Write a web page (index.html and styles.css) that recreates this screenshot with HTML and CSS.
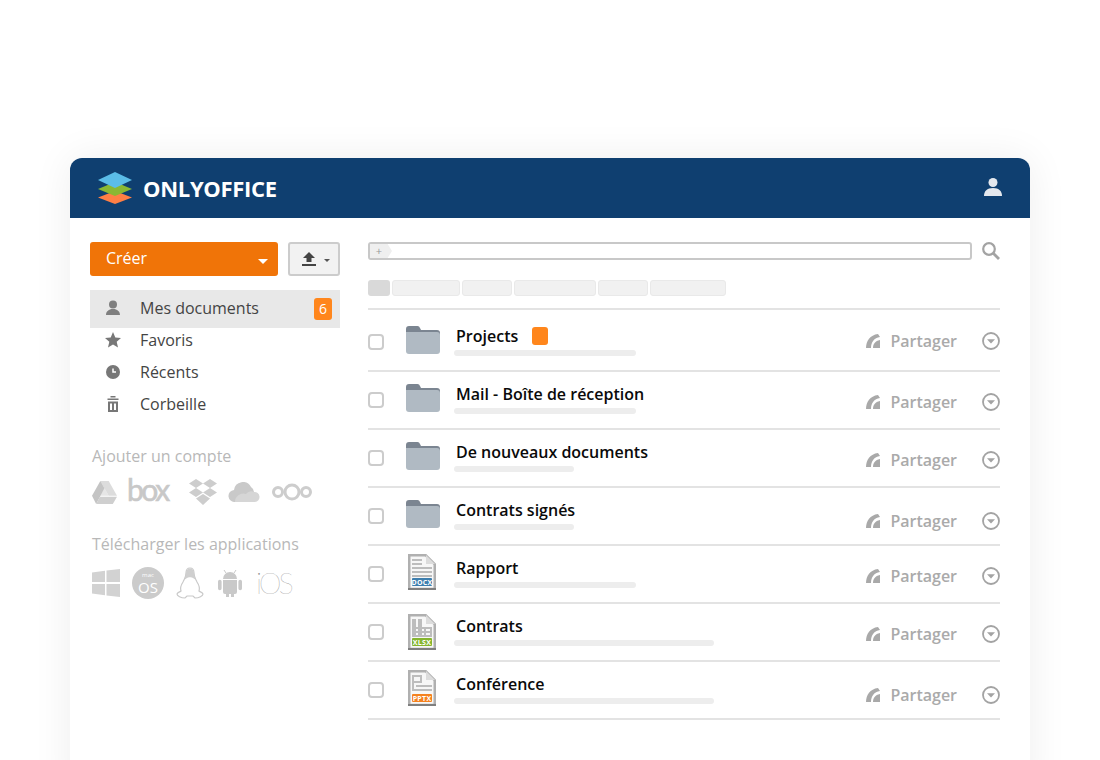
FILE: index.html
```html
<!DOCTYPE html>
<html lang="en">

<head>
    <meta charset="UTF-8">
    <meta name="viewport" content="width=device-width, initial-scale=1.0">
    <title>ONLYOFFICE</title>
    <link rel="stylesheet" href="styles.css">
</head>

<body>
    <svg class="defs" width="0" height="0">
        <symbol id="folder" viewBox="0 0 34 28">
            <path fill="#7b8591" d="M0 3a3 3 0 0 1 3-3h8a3 3 0 0 1 3 2l1 2h16a3 3 0 0 1 3 3v6H0z" />
            <path fill="#b0bac3" d="M0 6h31a3 3 0 0 1 3 3v16a3 3 0 0 1-3 3H3a3 3 0 0 1-3-3z" />
        </symbol>
        <symbol id="share" viewBox="0 0 14 14">
            <path fill="#a9a9a9" d="M0 14C0 7 4 1 12 0l2 3C8 4 5 8 5 14z" />
            <path fill="#a9a9a9" d="M7 14c0-4 2-7 7-8v8z" />
        </symbol>
        <symbol id="more" viewBox="0 0 18 18">
            <circle cx="9" cy="9" r="8" fill="none" stroke="#a3a3a3" stroke-width="1.8" />
            <path fill="#a3a3a3" d="M5 7.2h8L9 11.6z" />
        </symbol>
    </svg>

    <div class="window">
        <header class="topbar">
            <div class="logo">
                <svg width="38" height="32" viewBox="0 0 38 32">
                    <path fill="#ff7f45" d="M19 19l17 6.5L19 32 2 25.5z" />
                    <path fill="#8ab833" d="M19 10l17 7-17 7-17-7z" />
                    <path fill="#5bbde8" d="M19 0l17 8-17 8L2 8z" />
                </svg>
                <span class="logo-text">ONLYOFFICE</span>
            </div>
            <svg class="user" width="20" height="20" viewBox="0 0 20 20">
                <circle cx="10" cy="5.5" r="4.5" fill="#e4e8ee" />
                <path fill="#e4e8ee" d="M1 19c0-5 3-8 9-8s9 3 9 8z" />
            </svg>
        </header>

        <div class="content">
            <aside class="sidebar">
                <div class="actions">
                    <button class="create">Créer<span class="caret"></span></button>
                    <button class="upload">
                        <svg width="14" height="14" viewBox="0 0 14 14">
                            <path fill="#444" d="M7 0l6 6H9.500v4h-5V6H1zM0 12h14v2H0z" />
                        </svg>
                        <span class="caret small"></span>
                    </button>
                </div>

                <nav class="nav">
                    <a class="nav-item active">
                        <svg width="16" height="16" viewBox="0 0 16 16">
                            <circle cx="8" cy="4.500" r="4" fill="#7f7f7f" />
                            <path fill="#7f7f7f" d="M1 15c0-4 3-5 5-6h4c2 1 5 2 5 6z" />
                        </svg>
                        Mes documents
                        <span class="badge">6</span>
                    </a>
                    <a class="nav-item">
                        <svg width="16" height="16" viewBox="0 0 16 16">
                            <path fill="#777" d="M8 0l2.300 5.500 5.700.5-4.300 3.800 1.300 5.700L8 12.500l-5 3 1.300-5.700L0 6l5.700-.5z" />
                        </svg>
                        Favoris
                    </a>
                    <a class="nav-item">
                        <svg width="16" height="16" viewBox="0 0 16 16">
                            <circle cx="8" cy="8" r="7" fill="#777" />
                            <path fill="none" stroke="#fff" stroke-width="1.500" d="M8 4.500V8h3" />
                        </svg>
                        Récents
                    </a>
                    <a class="nav-item">
                        <svg width="16" height="16" viewBox="0 0 16 16">
                            <path fill="#777" d="M5.500 0h5v1.500h-5zM2.500 2.500h11V4h-11zM3 5.500h10V16H3zM5 7.500V14h2V7.500zM9 7.500V14h2V7.500z" fill-rule="evenodd" />
                        </svg>
                        Corbeille
                    </a>
                </nav>

                <p class="side-title">Ajouter un compte</p>
                <div class="brands">
                    <svg width="25" height="23" viewBox="0 0 24 22">
                        <path fill="#e6e6e6" d="M12 7l4 7H8z" />
                        <path fill="#dcdcdc" d="M8 0h8l8 14h-8z" />
                        <path fill="#c4c4c4" d="M8 0l4 7-8 15-4-8z" />
                        <path fill="#cfcfcf" d="M7.500 15H24l-4 7H4z" />
                    </svg>
                    <span class="box-logo">box</span>
                    <svg class="dropbox" width="28" height="26" viewBox="0 0 28 26">
                        <path fill="#cdcdcd" d="M7 0l7 4.500L7 9 0 4.500zM21 0l7 4.500L21 9l-7-4.500zM0 13.500L7 9l7 4.500L7 18zM21 9l7 4.500L21 18l-7-4.500zM7 19.500l7-4.500 7 4.500-7 6.500z" />
                    </svg>
                    <svg class="cloud" width="33" height="20" viewBox="0 0 33 20">
                        <path fill="#c9c9c9" d="M7 20a6 6 0 0 1-1-12 9 9 0 0 1 17-3 6.500 6.500 0 0 1 3 5z" />
                        <path fill="#d6d6d6" d="M7 20c0-6 6-10 11-8a7 7 0 0 1 8-2 5 5 0 0 1 1 10z" />
                    </svg>
                    <svg class="cloud-nc" width="40" height="18" viewBox="0 0 40 18">
                        <g fill="none" stroke="#cdcdcd" stroke-width="3">
                            <circle cx="20" cy="9" r="7" />
                            <circle cx="6" cy="9" r="4.500" />
                            <circle cx="34" cy="9" r="4.500" />
                        </g>
                    </svg>
                </div>

                <p class="side-title second">Télécharger les applications</p>
                <div class="apps">
                    <svg width="28" height="28" viewBox="0 0 28 28">
                        <path fill="#d2d2d2" d="M0 3.500l13-1.800V13H0zM14.500 1.500L28 0v13H14.500zM0 15h13v11.300L0 24.500zM14.500 15H28v13l-13.500-1.500z" />
                    </svg>
                    <svg class="macos" width="32" height="32" viewBox="0 0 32 32">
                        <circle cx="16" cy="16" r="16" fill="#cbcbcb" />
                        <text x="16" y="10" class="macos-small">mac</text>
                        <text x="16" y="26" class="macos-big">OS</text>
                    </svg>
                    <svg class="tux" width="28" height="32" viewBox="0 0 28 32">
                        <path fill="#fff" stroke="#c9c9c9" stroke-width="1.200" d="M14 1c-3 0-4 2-4 5 0 4-1 5-3 9-2 3-3 6-2 9-1 1-3 1-4 3 0 2 4 4 8 4l2-2h6l2 2c4 0 8-2 8-4-1-2-3-2-4-3 1-3 0-6-2-9-2-4-3-5-3-9 0-3-1-5-4-5z" />
                        <path fill="#cfcfcf" d="M10 6c0-6 8-6 8 0 0 3 1 5 2 7l-3-2c-1-1-5-1-6 0l-3 2c1-2 2-4 2-7z" />
                    </svg>
                    <svg class="android" width="24" height="28" viewBox="0 0 24 28">
                        <path fill="#c9c9c9" d="M5 10a7 7 0 0 1 14 0zM5 11h14v12a2 2 0 0 1-2 2h-1v3h-3v-3h-2v3H8v-3H7a2 2 0 0 1-2-2zM0 12.500a1.800 1.800 0 0 1 3.600 0v7a1.800 1.800 0 0 1-3.600 0zM20.400 12.500a1.800 1.800 0 0 1 3.600 0v7a1.800 1.800 0 0 1-3.600 0z" />
                        <path fill="none" stroke="#c9c9c9" d="M8 4L6 1M16 4l2-3" />
                    </svg>
                    <span class="ios">iOS</span>
                </div>
            </aside>

            <main class="main">
                <div class="search">
                    <div class="search-box">
                        <span class="search-tag">+</span>
                    </div>
                    <svg width="18" height="18" viewBox="0 0 18 18">
                        <circle cx="7" cy="7" r="5.800" fill="none" stroke="#a3a3a3" stroke-width="2.200" />
                        <path stroke="#a3a3a3" stroke-width="2.800" d="M11 11l6 6" />
                    </svg>
                </div>

                <div class="tabs">
                    <span class="tab current"></span>
                    <span class="tab tab-a"></span>
                    <span class="tab tab-b"></span>
                    <span class="tab tab-c"></span>
                    <span class="tab tab-b"></span>
                    <span class="tab tab-d"></span>
                </div>

                <div class="list">
                    <div class="row first">
                        <span class="check"></span>
                        <svg class="icon" width="34" height="28"><use href="#folder" /></svg>
                        <div class="name">
                            <div class="title">Projects<span class="tag"></span></div>
                            <div class="bar"></div>
                        </div>
                        <div class="share up"><svg width="14" height="14"><use href="#share" /></svg>Partager</div>
                        <svg class="more up" width="18" height="18"><use href="#more" /></svg>
                    </div>
                    <div class="row">
                        <span class="check"></span>
                        <svg class="icon" width="34" height="28"><use href="#folder" /></svg>
                        <div class="name">
                            <div class="title">Mail - Boîte de réception</div>
                            <div class="bar"></div>
                        </div>
                        <div class="share"><svg width="14" height="14"><use href="#share" /></svg>Partager</div>
                        <svg class="more" width="18" height="18"><use href="#more" /></svg>
                    </div>
                    <div class="row">
                        <span class="check"></span>
                        <svg class="icon" width="34" height="28"><use href="#folder" /></svg>
                        <div class="name">
                            <div class="title">De nouveaux documents</div>
                            <div class="bar short"></div>
                        </div>
                        <div class="share"><svg width="14" height="14"><use href="#share" /></svg>Partager</div>
                        <svg class="more" width="18" height="18"><use href="#more" /></svg>
                    </div>
                    <div class="row">
                        <span class="check"></span>
                        <svg class="icon" width="34" height="28"><use href="#folder" /></svg>
                        <div class="name">
                            <div class="title">Contrats signés</div>
                            <div class="bar short"></div>
                        </div>
                        <div class="share down"><svg width="14" height="14"><use href="#share" /></svg>Partager</div>
                        <svg class="more down" width="18" height="18"><use href="#more" /></svg>
                    </div>
                    <div class="row">
                        <span class="check"></span>
                        <svg class="icon doc" width="28" height="36" viewBox="0 0 28 36">
                            <path fill="#f7f7f7" stroke="#b0b0b0" stroke-width="2.500" d="M1.250 1.250h16.500l9 9V35H1.250z" />
                            <path fill="#bdbdbd" d="M4 5h10v2H4zM4 9h10v2H4zM4 13h20v2H4zM4 17h20v2H4zM4 21h20v2H4z" />
                            <path fill="#dcdcdc" d="M18 1v9h9z" />
                            <path fill="#7f7f7f" d="M0 34h28v2H0z" />
                            <rect x="4" y="24" width="20" height="8" rx="1" fill="#3d7eae" />
                            <text x="14" y="30.500" class="doc-label">DOCX</text>
                        </svg>
                        <div class="name">
                            <div class="title">Rapport</div>
                            <div class="bar"></div>
                        </div>
                        <div class="share"><svg width="14" height="14"><use href="#share" /></svg>Partager</div>
                        <svg class="more" width="18" height="18"><use href="#more" /></svg>
                    </div>
                    <div class="row">
                        <span class="check"></span>
                        <svg class="icon doc low" width="28" height="36" viewBox="0 0 28 36">
                            <path fill="#f7f7f7" stroke="#b0b0b0" stroke-width="2.500" d="M1.250 1.250h16.500l9 9V35H1.250z" />
                            <path fill="#bdbdbd" d="M4 5h4v16H4zM10 5h4v16h-4zM4 13h20v2H4zM4 17h20v2H4zM4 21h20v2H4zM16 13h2v8h-2zM22 13h2v8h-2z" />
                            <path fill="#dcdcdc" d="M18 1v9h9z" />
                            <path fill="#7f7f7f" d="M0 34h28v2H0z" />
                            <rect x="4" y="24" width="20" height="8" rx="1" fill="#86b52f" />
                            <text x="14" y="30.500" class="doc-label">XLSX</text>
                        </svg>
                        <div class="name">
                            <div class="title">Contrats</div>
                            <div class="bar long"></div>
                        </div>
                        <div class="share"><svg width="14" height="14"><use href="#share" /></svg>Partager</div>
                        <svg class="more" width="18" height="18"><use href="#more" /></svg>
                    </div>
                    <div class="row">
                        <span class="check"></span>
                        <svg class="icon doc" width="28" height="36" viewBox="0 0 28 36">
                            <path fill="#f7f7f7" stroke="#b0b0b0" stroke-width="2.500" d="M1.250 1.250h16.500l9 9V35H1.250z" />
                            <path fill="#bdbdbd" d="M4 5h2v16H4zM6 5h8v2H6zM12 5h2v8h-2zM6 11h8v2H6zM8 15h16v2H8zM6 19h18v2H6z" />
                            <path fill="#dcdcdc" d="M18 1v9h9z" />
                            <path fill="#7f7f7f" d="M0 34h28v2H0z" />
                            <rect x="4" y="24" width="20" height="8" rx="1" fill="#f58220" />
                            <text x="14" y="30.500" class="doc-label">PPTX</text>
                        </svg>
                        <div class="name">
                            <div class="title">Conférence</div>
                            <div class="bar long"></div>
                        </div>
                        <div class="share down"><svg width="14" height="14"><use href="#share" /></svg>Partager</div>
                        <svg class="more down" width="18" height="18"><use href="#more" /></svg>
                    </div>
                </div>
            </main>
        </div>
    </div>
</body>

</html>
```

FILE: styles.css
```css
html,
body {
    height: 760px;
    overflow: hidden;
}

body {
    margin: 0;
    background-color: white;
    font-family: "Open Sans", sans-serif;
}

.defs {
    display: block;
    height: 0;
}

.window {
    width: 960px;
    height: 640px;
    margin: 158px auto 0;
    background-color: white;
    border-radius: 12px 12px 0 0;
    box-shadow: 0 0 40px rgba(0, 0, 0, 0.07);
}

.topbar {
    height: 60px;
    padding: 0 27px 0 26px;
    display: flex;
    align-items: center;
    justify-content: space-between;
    background-color: #0f3f70;
    border-radius: 12px 12px 0 0;
}

.logo {
    display: flex;
    align-items: center;
    gap: 9px;
}

.logo-text {
    color: white;
    font-size: 22px;
    font-weight: 700;
    letter-spacing: -0.3px;
}

.user {
    margin-top: -2px;
}

.content {
    display: flex;
    padding: 24px 30px 0 20px;
    gap: 28px;
}

.sidebar {
    width: 250px;
    flex-shrink: 0;
}

.actions {
    display: flex;
    gap: 10px;
}

button {
    height: 34px;
    padding: 0;
    font-family: inherit;
    box-sizing: border-box;
    border-radius: 3px;
}

.create {
    width: 188px;
    padding: 0 10px 2px 16px;
    display: flex;
    align-items: center;
    justify-content: space-between;
    border: 0;
    background-color: #f07408;
    color: white;
    font-size: 16px;
}

.caret {
    margin-top: 7px;
    border-top: 5px solid white;
    border-left: 5px solid transparent;
    border-right: 5px solid transparent;
}

.caret.small {
    margin-top: 2px;
    border-top: 3px solid #555;
    border-left: 3px solid transparent;
    border-right: 3px solid transparent;
}

.upload {
    width: 52px;
    padding-left: 4px;
    display: flex;
    align-items: center;
    justify-content: center;
    gap: 8px;
    border: 2px solid #cccccc;
    background-color: #f2f2f2;
}

.nav {
    margin-top: 14px;
}

.nav-item {
    height: 32px;
    padding-left: 15px;
    display: flex;
    align-items: center;
    gap: 19px;
    font-size: 16px;
    color: #444444;
}

.nav-item.active {
    height: 38px;
    margin-bottom: -4px;
    padding-right: 8px;
    padding-bottom: 2px;
    box-sizing: border-box;
    background-color: #e8e8e8;
}

.badge {
    width: 18px;
    height: 22px;
    margin-top: 2px;
    margin-left: auto;
    background-color: #ff861c;
    border-radius: 3px;
    color: white;
    font-size: 14px;
    line-height: 22px;
    text-align: center;
}

.side-title {
    margin: 25px 0 0 2px;
    font-size: 16px;
    line-height: 22px;
    color: #b8b8b8;
}

.side-title.second {
    margin-top: 28px;
}

.brands,
.apps {
    margin: 12px 0 0 2px;
    display: flex;
    align-items: center;
}

.brands {
    height: 26px;
}

.box-logo {
    margin: -6px 0 0 10px;
    font-family: "Lato", sans-serif;
    font-size: 30px;
    line-height: 26px;
    letter-spacing: -2.5px;
    color: #c8c8c8;
    -webkit-text-stroke: 0.6px #c8c8c8;
}

.dropbox {
    margin-left: 21px;
}

.cloud {
    margin-left: 11px;
}

.cloud-nc {
    margin-left: 11px;
}

.apps {
    height: 32px;
}

.macos {
    margin-left: 12px;
}

.macos-small {
    font-size: 6px;
    fill: white;
    text-anchor: middle;
}

.macos-big {
    font-size: 15px;
    fill: white;
    text-anchor: middle;
}

.tux {
    margin-left: 12px;
}

.android {
    margin-left: 14px;
}

.ios {
    margin-left: 14px;
    font-family: "Lato", sans-serif;
    font-size: 29px;
    font-weight: 100;
    line-height: 32px;
    letter-spacing: -3px;
    color: #8a8a8a;
}

.main {
    width: 632px;
}

.search {
    display: flex;
    align-items: center;
    justify-content: space-between;
    height: 18px;
}

.search-box {
    width: 604px;
    height: 18px;
    box-sizing: border-box;
    border: 2px solid #c8c8c8;
    border-radius: 3px;
}

.search-tag {
    display: block;
    width: 22px;
    height: 14px;
    padding-right: 4px;
    box-sizing: border-box;
    background-color: #efefef;
    clip-path: polygon(0 0, 80% 0, 100% 50%, 80% 100%, 0 100%);
    color: #999999;
    font-size: 11px;
    line-height: 14px;
    text-align: center;
}

.tabs {
    margin-top: 20px;
    display: flex;
    gap: 2px;
}

.tab {
    height: 16px;
    box-sizing: border-box;
    background-color: #f1f1f1;
    border: 1px solid #e9e9e9;
    border-radius: 3px;
}

.tab.current {
    width: 22px;
    background-color: #d9d9d9;
    border: 0;
}

.tab-a {
    width: 68px;
}

.tab-b {
    width: 50px;
}

.tab-c {
    width: 82px;
}

.tab-d {
    width: 76px;
}

.list {
    margin-top: 12px;
    border-top: 2px solid #e3e3e3;
}

.row {
    height: 58px;
    box-sizing: border-box;
    display: flex;
    align-items: flex-start;
    border-bottom: 2px solid #e3e3e3;
}

.row.first {
    height: 62px;
    padding-top: 4px;
}

.check {
    width: 16px;
    height: 16px;
    margin-top: 20px;
    flex-shrink: 0;
    box-sizing: border-box;
    border: 2px solid #cccccc;
    border-radius: 4px;
}

.icon {
    margin: 12px 16px 0 22px;
    flex-shrink: 0;
}

.icon.doc {
    margin: 8px 20px 0 24px;
}

.icon.doc.low {
    margin-top: 10px;
}

.name {
    flex: 1;
    padding-top: 11px;
}

.title {
    display: flex;
    align-items: center;
    font-size: 16px;
    font-weight: 600;
    line-height: 22px;
    color: #0a0a0a;
}

.tag {
    width: 16px;
    height: 18px;
    margin-left: 14px;
    background-color: #ff861c;
    border-radius: 3px;
}

.bar {
    width: 182px;
    height: 6px;
    margin: 3px 0 0 -2px;
    background-color: #ededed;
    border-radius: 3px;
}

.bar.short {
    width: 120px;
}

.bar.long {
    width: 260px;
}

.share {
    margin-top: 19px;
    display: flex;
    align-items: center;
    gap: 10px;
    font-size: 16px;
    font-weight: 600;
    line-height: 22px;
    color: #aaaaaa;
}

.more {
    margin: 21px 0 0 25px;
    flex-shrink: 0;
}

.share.up {
    margin-top: 16px;
}

.more.up {
    margin-top: 18px;
}

.share.down {
    margin-top: 22px;
}

.more.down {
    margin-top: 24px;
}

.doc-label {
    font-size: 7px;
    font-weight: 700;
    letter-spacing: 0.3px;
    fill: white;
    text-anchor: middle;
}
```
